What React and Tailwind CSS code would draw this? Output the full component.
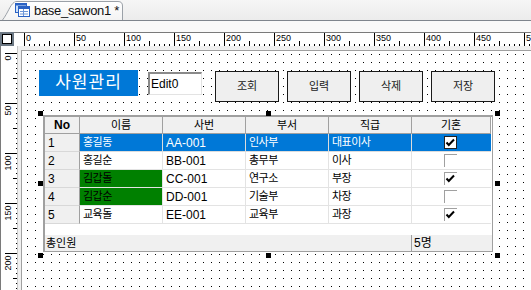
import React from "react";

function HRuler() {
  const ticks = [];
  for (let u = 0; u <= 510; u += 5) {
    const x = 10 + u + 0.5;
    let h = 2;
    if (u % 50 === 0) h = 13;
    else if (u % 25 === 0) h = 5;
    ticks.push(<line key={u} x1={x} x2={x} y1={13 - h} y2={13} stroke="#000" strokeWidth="1" />);
    if (u % 50 === 0) {
      ticks.push(
        <text key={"t" + u} x={x + 1.5} y={8} fontSize="9" fill="#000" fontFamily="Liberation Sans, Arial, sans-serif">
          {u}
        </text>
      );
    }
  }
  return (
    <svg width="517" height="13" className="block">
      {ticks}
    </svg>
  );
}

function VRuler() {
  const ticks = [];
  for (let u = 0; u <= 240; u += 5) {
    const y = 7 + u + 0.5;
    let w = 2;
    if (u % 50 === 0) w = 13;
    else if (u % 25 === 0) w = 5;
    ticks.push(<line key={u} y1={y} y2={y} x1={17 - w} x2={17} stroke="#000" strokeWidth="1" />);
    if (u % 50 === 0) {
      ticks.push(
        <text
          key={"t" + u}
          transform={`translate(10, ${y + 2}) rotate(-90)`}
          textAnchor="end"
          fontSize="9"
          fill="#000"
          fontFamily="Liberation Sans, Arial, sans-serif"
        >
          {u}
        </text>
      );
    }
  }
  return (
    <svg width="17" height="244" className="block">
      {ticks}
    </svg>
  );
}

function Check({ on, sel }) {
  return (
    <span
      className={
        "relative block w-[13px] h-[13px] " +
        (sel ? "bg-white border border-[#222]" : "border-t border-l border-[#a0a0a0]")
      }
    >
      {on && (
        <svg width="13" height="13" viewBox="0 0 13 13" className="absolute left-[-1px] top-[-1px]">
          <polyline points="2.5,6.5 4.8,9 10,3.5" fill="none" stroke="#000" strokeWidth="2" />
        </svg>
      )}
    </span>
  );
}

const rows = [
  { no: "1", name: "홍길동", id: "AA-001", dept: "인사부", rank: "대표이사", m: true, sel: true },
  { no: "2", name: "홍길순", id: "BB-001", dept: "총무부", rank: "이사", m: false },
  { no: "3", name: "김갑돌", id: "CC-001", dept: "연구소", rank: "부장", m: true, green: true },
  { no: "4", name: "김갑순", id: "DD-001", dept: "기술부", rank: "차장", m: false, green: true },
  { no: "5", name: "교육돌", id: "EE-001", dept: "교육부", rank: "과장", m: true },
];

function Grid() {
  const headers = ["이름", "사번", "부서", "직급", "기혼"];
  return (
    <div className="relative ml-[21px] mt-[13px] w-[450px] h-[137px]">
      <div className="w-[450px] h-[137px] bg-white border-t-2 border-l-2 border-r border-b border-[#a0a0a0] flex flex-col">
        <div className="grid grid-cols-[35px_83px_83px_83px_83px_79px]">
          <div className="h-[17px] bg-[#f0f0f0] border-r border-b border-[#a0a0a0] flex items-center justify-center text-[12px] font-bold text-black">
            No
          </div>
          {headers.map((h) => (
            <div
              key={h}
              className="h-[17px] bg-[#f0f0f0] border-r border-b border-[#a0a0a0] flex items-center justify-center text-[11px] text-black"
            >
              {h}
            </div>
          ))}
          {rows.map((r) => {
            const base = "h-[18px] border-r border-b flex items-center pl-[3px] text-[11px] ";
            const cell = r.sel
              ? "bg-[#0078d7] text-white border-[#dcdcdc] "
              : "bg-white text-black border-[#e3e3e3] ";
            return (
              <React.Fragment key={r.no}>
                <div className={base + "bg-[#f0f0f0] border-r-[#a0a0a0] border-b-[#d8d8d8] text-[12px] text-black"}>
                  {r.no}
                </div>
                <div
                  className={
                    base +
                    (r.green ? "bg-[#008000] text-black border-[#e3e3e3] " : cell) +
                    "tracking-[-0.5px]"
                  }
                >
                  {r.name}
                </div>
                <div className={base + cell + "text-[12px]"}>{r.id}</div>
                <div className={base + cell + "tracking-[-0.5px]"}>{r.dept}</div>
                <div className={base + cell + "tracking-[-0.5px]"}>{r.rank}</div>
                <div className={"h-[18px] border-b flex items-center pl-[32px] " + cell}>
                  <Check on={r.m} sel={r.sel} />
                </div>
              </React.Fragment>
            );
          })}
        </div>
        <div className="h-[11px] bg-white" />
        <div className="h-[16px] bg-[#f0f0f0] flex text-[11px] text-black">
          <div className="w-[367px] border-r border-[#a0a0a0] flex items-center pl-[1px]">총인원</div>
          <div className="flex items-center pl-[2px] text-[12px]">5명</div>
        </div>
      </div>
      <span className="absolute left-[-5px] top-[-4px] w-[5px] h-[5px] bg-black" />
      <span className="absolute left-[223px] top-[-4px] w-[5px] h-[5px] bg-black" />
      <span className="absolute left-[452px] top-[-4px] w-[5px] h-[5px] bg-black" />
      <span className="absolute left-[-5px] top-[66px] w-[5px] h-[5px] bg-black" />
      <span className="absolute left-[452px] top-[66px] w-[5px] h-[5px] bg-black" />
      <span className="absolute left-[-5px] top-[138px] w-[5px] h-[5px] bg-black" />
      <span className="absolute left-[223px] top-[138px] w-[5px] h-[5px] bg-black" />
      <span className="absolute left-[452px] top-[138px] w-[5px] h-[5px] bg-black" />
    </div>
  );
}

function Btn({ children }) {
  return (
    <div className="w-[64px] h-[31px] bg-[#efefef] border border-[#1a1a1a] flex items-center justify-center text-[11px] text-[#222]">
      {children}
    </div>
  );
}

function TabIcon() {
  return (
    <svg width="15" height="14" viewBox="0 0 15 14" className="block">
      <rect x="0.5" y="0.5" width="11" height="9" fill="#cfe3fb" stroke="#2a62c4" />
      <rect x="0.5" y="0.5" width="11" height="2" fill="#2a62c4" />
      <rect x="3.5" y="3.5" width="11" height="10" fill="#ffffff" stroke="#2a62c4" />
      <rect x="3.5" y="3.5" width="11" height="2.5" fill="#2a62c4" />
      <line x1="5" y1="8.5" x2="13" y2="8.5" stroke="#6d96d8" />
      <line x1="5" y1="11" x2="13" y2="11" stroke="#6d96d8" />
      <line x1="8.5" y1="6" x2="8.5" y2="13" stroke="#6d96d8" />
    </svg>
  );
}

export default function App() {
  return (
    <div className="w-[531px] h-[290px] overflow-hidden flex flex-col bg-white font-['Liberation_Sans','Noto_Sans_CJK_KR',sans-serif]">
      {/* tab strip */}
      <div className="h-[21px] shrink-0 bg-gradient-to-b from-[#f6f6f6] to-[#ececec] border-b border-[#7f858d] flex items-end">
        <div className="relative ml-[2px] w-[122px] h-[19px]">
          <svg width="122" height="19" className="absolute inset-0">
            <defs>
              <linearGradient id="tabg" x1="0" y1="0" x2="0" y2="1">
                <stop offset="0" stopColor="#ffffff" />
                <stop offset="1" stopColor="#f3f3f3" />
              </linearGradient>
            </defs>
            <path
              d="M0.5 19 C6 12 8 4 12 1.5 L12.5 1 Q13.5 0.5 15 0.5 L116 0.5 Q120.5 0.5 120.5 5 L120.5 19"
              fill="url(#tabg)"
              stroke="#9ba1a8"
            />
          </svg>
          <div className="relative flex items-center h-full pl-[13px] gap-[4px] pb-[1px]">
            <TabIcon />
            <span className="text-[13px] text-[#111] leading-none tracking-[-0.3px]">base_sawon1 *</span>
          </div>
        </div>
      </div>
      <div className="h-[11px] shrink-0 bg-[#f9f9f9]" />
      {/* top ruler row */}
      <div className="h-[14px] shrink-0 flex">
        <div className="w-[14px] h-[14px] border-2 border-[#6c7884] bg-black p-[1px]">
          <div className="w-full h-full bg-white" />
        </div>
        <div className="flex-1 border-t border-[#7a7a7a] bg-white overflow-hidden">
          <HRuler />
        </div>
      </div>
      {/* body */}
      <div className="flex-1 flex min-h-0">
        <div className="w-[17px] shrink-0 bg-white border-l border-[#7a7a7a]">
          <VRuler />
        </div>
        <div className="flex-1 bg-[#f0f0f0] border-l border-[#c8c8c8] pl-[3px] pt-[4px] min-w-0">
          <div className="relative h-full border-l border-t border-[#a0a0a0] bg-white">
            <svg className="absolute inset-0 w-full h-full">
              <defs>
                <pattern id="dots" x="5" y="3" width="8" height="8" patternUnits="userSpaceOnUse">
                  <rect x="0" y="0" width="1" height="1" fill="#000" />
                </pattern>
              </defs>
              <rect width="100%" height="100%" fill="url(#dots)" />
            </svg>
            <div className="relative">
              <div className="flex items-start pl-[17px] pt-[19px]">
                <div className="w-[99px] h-[26px] bg-[#0078d7] flex items-center justify-center text-white text-[17px] tracking-[1px]">
                  사원관리
                </div>
                <div className="ml-[10px] mt-[2px] w-[54px] h-[23px] bg-white border-t-2 border-l-2 border-[#8a8a8a] border-r border-b border-r-[#e3e3e3] border-b-[#e3e3e3] flex items-center pl-[1px] text-[12px] text-black">
                  Edit0
                </div>
                <div className="ml-[13px] mt-[1px] flex gap-[8px]">
                  <Btn>조회</Btn>
                  <Btn>입력</Btn>
                  <Btn>삭제</Btn>
                  <Btn>저장</Btn>
                </div>
              </div>
              <Grid />
            </div>
          </div>
        </div>
      </div>
    </div>
  );
}
